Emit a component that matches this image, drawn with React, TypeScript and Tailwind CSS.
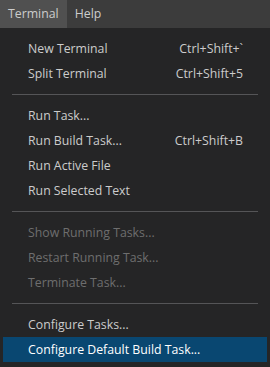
import React from 'react';

type Item =
  | { kind: 'item'; label: string; shortcut?: string; disabled?: boolean; active?: boolean }
  | { kind: 'sep' };

const items: Item[] = [
  { kind: 'item', label: 'New Terminal', shortcut: 'Ctrl+Shift+`' },
  { kind: 'item', label: 'Split Terminal', shortcut: 'Ctrl+Shift+5' },
  { kind: 'sep' },
  { kind: 'item', label: 'Run Task...' },
  { kind: 'item', label: 'Run Build Task...', shortcut: 'Ctrl+Shift+B' },
  { kind: 'item', label: 'Run Active File' },
  { kind: 'item', label: 'Run Selected Text' },
  { kind: 'sep' },
  { kind: 'item', label: 'Show Running Tasks...', disabled: true },
  { kind: 'item', label: 'Restart Running Task...', disabled: true },
  { kind: 'item', label: 'Terminate Task...', disabled: true },
  { kind: 'sep' },
  { kind: 'item', label: 'Configure Tasks...' },
  { kind: 'item', label: 'Configure Default Build Task...', active: true },
];

export default function App() {
  return (
    <div
      className="w-[270px] h-[367px] overflow-hidden bg-[#252526] text-[12.3px]"
      style={{ fontFamily: '"Open Sans", "Noto Sans", sans-serif' }}
    >
      {/* menu bar */}
      <div className="flex h-[28px] items-stretch bg-[#3c3c3c] text-[#cccccc]">
        <div className="flex items-center bg-[#505050] px-[8px] pt-px">Terminal</div>
        <div className="flex items-center px-[8px] pt-px">Help</div>
      </div>

      {/* dropdown */}
      <div className="flex flex-col pt-[8px]">
        {items.map((it, i) =>
          it.kind === 'sep' ? (
            <div key={i} className="flex h-[17px] items-center px-[12px]">
              <div className="h-px w-full bg-[#555557]" />
            </div>
          ) : (
            <div
              key={i}
              className={
                'mx-[3px] flex h-[25px] items-center justify-between pl-[25px] pr-[24px] pt-[2px] ' +
                (it.active
                  ? 'bg-[#094771] text-white'
                  : it.disabled
                    ? 'text-[#6e6e6e]'
                    : 'text-[#cccccc]')
              }
            >
              <span>{it.label}</span>
              {it.shortcut ? <span>{it.shortcut}</span> : null}
            </div>
          ),
        )}
      </div>
    </div>
  );
}
